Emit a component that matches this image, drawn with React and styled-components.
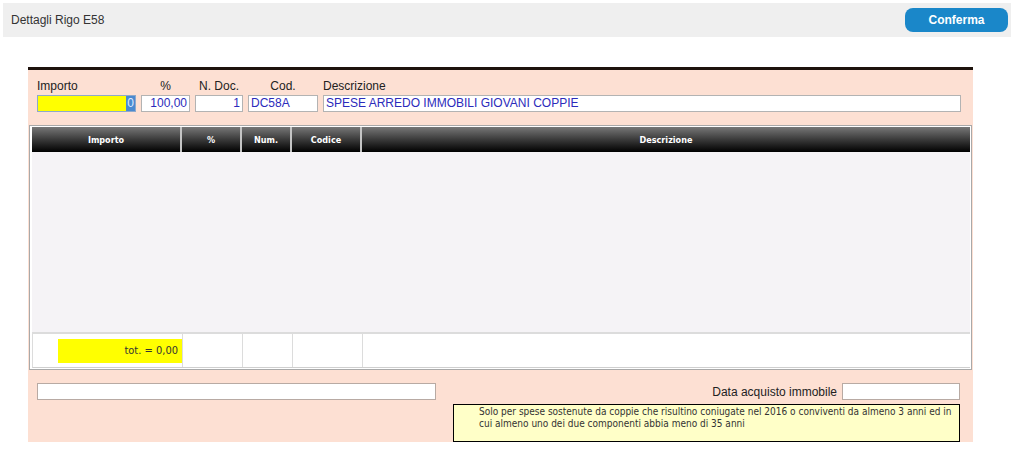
import React from 'react';
import styled, {createGlobalStyle} from 'styled-components';

const GlobalStyle = createGlobalStyle`
  body {
    margin: 0;
    background: #fff;
    font-family: "Liberation Sans", Arial, sans-serif;
  }
`

const Page = styled.div`
  padding: 3px 0 0 3px;
`

const TopBar = styled.div`
  height: 34px;
  background: #efefef;
  display: flex;
  align-items: center;
  justify-content: space-between;
  padding: 0 3px 0 8px;
`

const Title = styled.span`
  font-size: 12px;
  color: #333;
`

const Button = styled.button`
  width: 103px;
  height: 24px;
  padding: 0;
  border: none;
  border-radius: 8px;
  background: #1a87c9;
  color: #fff;
  font: bold 12px "Liberation Sans", Arial, sans-serif;
`

const Panel = styled.div`
  margin: 30px 0 0 25px;
  width: 945px;
  border-top: 3px solid #1e130d;
  background: #fde0d3;
`

const Fields = styled.div`
  display: grid;
  grid-template-columns: 99px 49px 48px 70px 638px;
  column-gap: 5px;
  padding: 9px 0 0 9px;
`

const Column = styled.div`
  display: flex;
  flex-direction: column;
  gap: 2px;
`

const Label = styled.span`
  font-size: 12px;
  line-height: 14px;
  color: #222;
  text-align: ${p => p.center ? 'center' : 'left'};
  white-space: nowrap;
`

const Field = styled.div`
  box-sizing: border-box;
  height: 17px;
  width: ${p => p.width ? p.width + 'px' : 'auto'};
  background: ${p => p.highlight ? '#ffff00' : '#fff'};
  border: 1px solid ${p => p.highlight ? '#8ea9cb' : p.muted ? '#b8aaa3' : '#b3b3b3'};
  color: #2b2bbb;
  font-size: 12px;
  line-height: 15px;
  padding: 0 2px;
  text-align: ${p => p.right ? 'right' : 'left'};
  white-space: nowrap;
  overflow: hidden;
`

const Selected = styled.span`
  display: inline-block;
  height: 15px;
  padding: 0 1px;
  margin-right: -2px;
  background: #4a8ad0;
  color: #dfe9ff;
`

const Grid = styled.div`
  margin: 13px 1px 0;
  border: 1px solid #a9a9a9;
  padding: 1px 1px 1px 2px;
  background: #fff;
`

const Row = styled.div`
  display: grid;
  grid-template-columns: 150px 60px 50px 70px 1fr;
`

const HeadCell = styled.div`
  height: 25px;
  background: linear-gradient(to bottom, #777 0%, #3a3a3a 50%, #000 100%);
  border-right: ${p => p.last ? 'none' : '2px solid #c4c4c4'};
  color: #fff;
  font: bold 9px "DejaVu Sans Condensed", "DejaVu Sans", sans-serif;
  display: flex;
  align-items: center;
  justify-content: center;
`

const Body = styled.div`
  height: 180px;
  background: #f5f3f6;
`

const Footer = styled(Row)`
  border-top: 2px solid #dcdcdc;
  border-left: 1px solid #dcdcdc;
  border-bottom: 1px solid #cfcfcf;
`

const FootCell = styled.div`
  height: 33px;
  border-right: ${p => p.last ? 'none' : '1px solid #dcdcdc'};
  display: flex;
  align-items: center;
  justify-content: flex-end;
`

const Total = styled.div`
  width: 124px;
  height: 24px;
  background: #ffff00;
  color: #333;
  font: 11px "DejaVu Sans Condensed", "DejaVu Sans", sans-serif;
  display: flex;
  align-items: center;
  justify-content: flex-end;
  padding-right: 4px;
  box-sizing: border-box;
`

const Bottom = styled.div`
  display: flex;
  justify-content: space-between;
  align-items: flex-start;
  padding: 13px 13px 0 9px;
`

const Side = styled.div`
  width: 507px;
  display: flex;
  flex-direction: column;
  gap: 4px;
`

const DateRow = styled.div`
  display: flex;
  justify-content: flex-end;
  align-items: center;
  gap: 5px;
`

const Note = styled.div`
  box-sizing: border-box;
  height: 38px;
  border: 1px solid #000;
  background: #ffffc8;
  padding: 1px 6px 0 25px;
  color: #333;
  font: 10px "DejaVu Sans Condensed", "DejaVu Sans", sans-serif;
  line-height: 12px;
  white-space: nowrap;
`

const headers = ['Importo', '%', 'Num.', 'Codice', 'Descrizione'];

export default function App() {
    return (
        <Page>
            <GlobalStyle/>
            <TopBar>
                <Title>Dettagli Rigo E58</Title>
                <Button>Conferma</Button>
            </TopBar>

            <Panel>
                <Fields>
                    <Column>
                        <Label>Importo</Label>
                        <Field highlight right><Selected>0</Selected></Field>
                    </Column>
                    <Column>
                        <Label center>%</Label>
                        <Field right>100,00</Field>
                    </Column>
                    <Column>
                        <Label center>N. Doc.</Label>
                        <Field right>1</Field>
                    </Column>
                    <Column>
                        <Label center>Cod.</Label>
                        <Field>DC58A</Field>
                    </Column>
                    <Column>
                        <Label>Descrizione</Label>
                        <Field>SPESE ARREDO IMMOBILI GIOVANI COPPIE</Field>
                    </Column>
                </Fields>

                <Grid>
                    <Row>
                        {headers.map((h, i) => (
                            <HeadCell key={h} last={i === headers.length - 1}>{h}</HeadCell>
                        ))}
                    </Row>
                    <Body/>
                    <Footer>
                        <FootCell><Total>tot. = 0,00</Total></FootCell>
                        <FootCell/>
                        <FootCell/>
                        <FootCell/>
                        <FootCell last/>
                    </Footer>
                </Grid>

                <Bottom>
                    <Field muted width={399}/>
                    <Side>
                        <DateRow>
                            <Label>Data acquisto immobile</Label>
                            <Field muted width={118}/>
                        </DateRow>
                        <Note>
                            Solo per spese sostenute da coppie che risultino coniugate nel 2016 o conviventi da almeno 3 anni ed in
                            <br/>
                            cui almeno uno dei due componenti abbia meno di 35 anni
                        </Note>
                    </Side>
                </Bottom>
            </Panel>
        </Page>
    )
}
